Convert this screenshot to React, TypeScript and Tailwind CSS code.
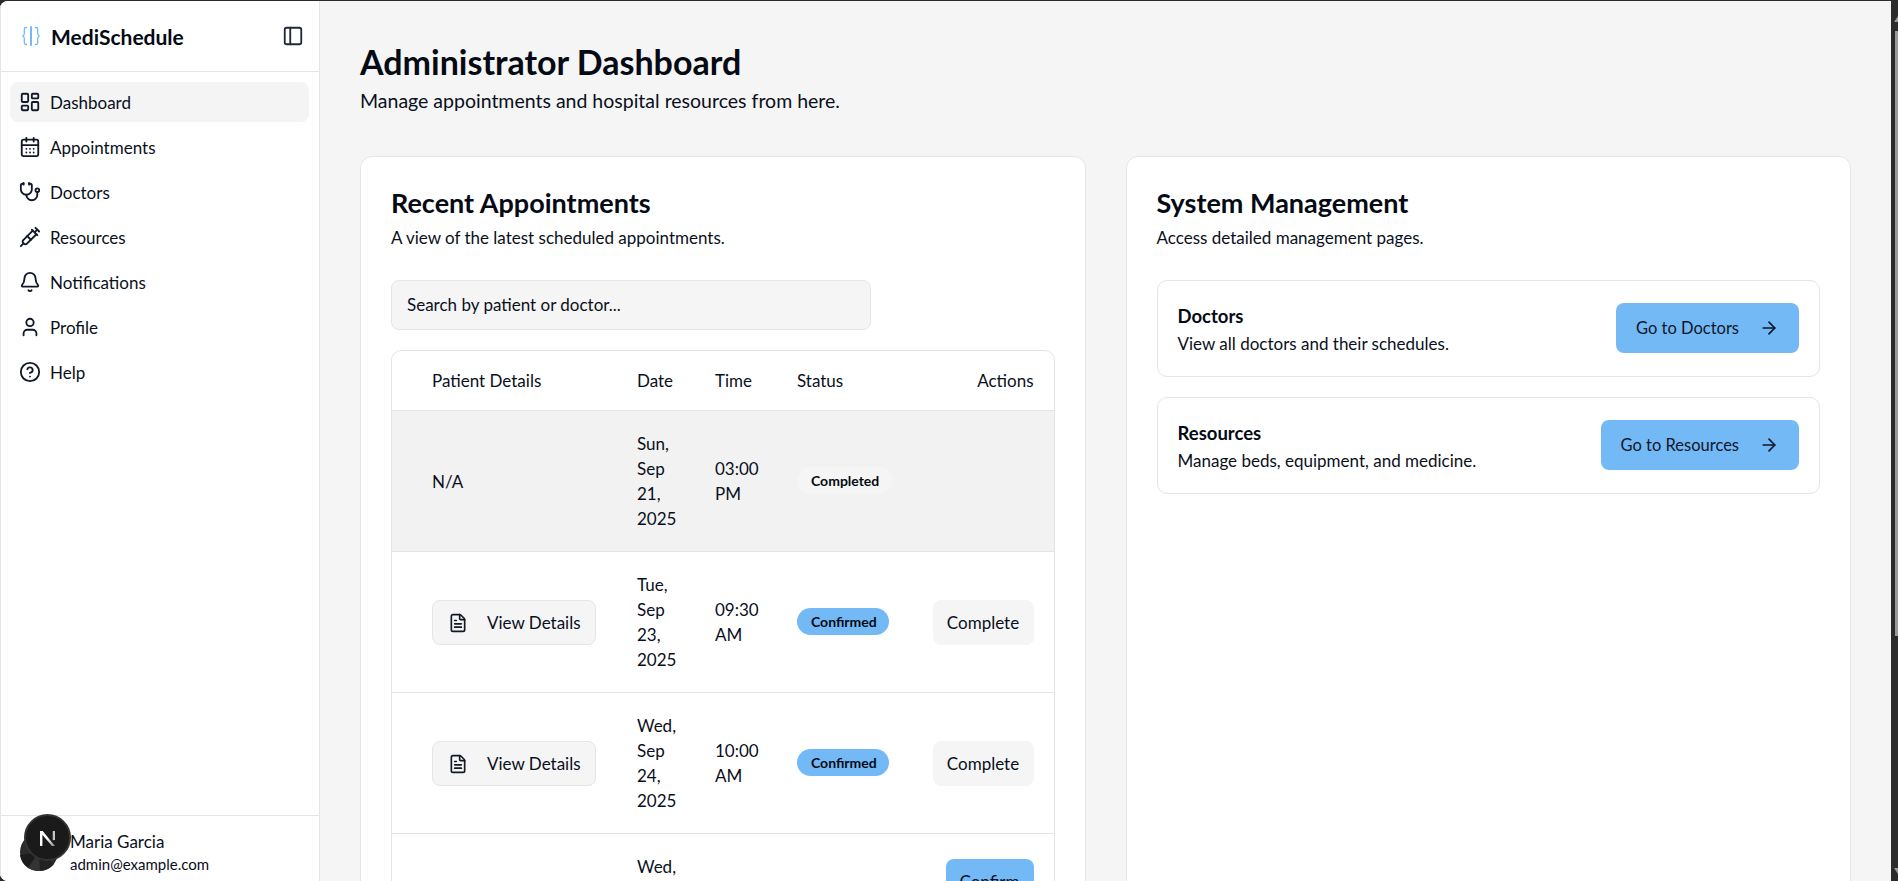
import React from "react";
import { LayoutDashboard, CalendarDays, Stethoscope, Syringe, Bell, User, CircleHelp, PanelLeft, ArrowRight, FileText } from "lucide-react";

const nav = [
  { label: "Dashboard", Icon: LayoutDashboard, active: true },
  { label: "Appointments", Icon: CalendarDays },
  { label: "Doctors", Icon: Stethoscope },
  { label: "Resources", Icon: Syringe },
  { label: "Notifications", Icon: Bell },
  { label: "Profile", Icon: User },
  { label: "Help", Icon: CircleHelp },
];

const rows = [
  { details: false, date: ["Sun,", "Sep", "21,", "2025"], time: ["03:00", "PM"], status: "Completed", action: "", muted: true },
  { details: true, date: ["Tue,", "Sep", "23,", "2025"], time: ["09:30", "AM"], status: "Confirmed", action: "Complete" },
  { details: true, date: ["Wed,", "Sep", "24,", "2025"], time: ["10:00", "AM"], status: "Confirmed", action: "Complete" },
  { details: true, date: ["Wed,", "Sep", "24,", "2025"], time: ["11:00", "AM"], status: "Pending", action: "Confirm" },
];

function Manage({ title, text, cta }: { title: string; text: string; cta: string }) {
  return (
    <div className="h-[97px] rounded-[10px] border border-[#e5e5e5] flex items-center justify-between px-5">
      <div className="pt-[2px]">
        <div className="text-[18.5px] leading-[28px] font-bold text-[#050a14]">{title}</div>
        <div className="text-[17px] leading-[28px] text-[#0a0f1c]">{text}</div>
      </div>
      <button className="h-[50px] mb-[2px] rounded-lg bg-[#73b9f6] pl-5 pr-[20px] flex items-center gap-[20px] text-[16.5px] text-[#0f172a]">
        <span className="pt-[2px]">{cta}</span>
        <ArrowRight size={20} strokeWidth={2} />
      </button>
    </div>
  );
}

export default function App() {
  return (
    <div className="h-[881px] w-[1898px] overflow-hidden flex bg-[#2b2b2b] pt-px text-[#0a0f1c] font-['Lato','Liberation_Sans',sans-serif] relative">
      <div className="flex-1 min-w-0 flex bg-[#f5f5f5] rounded-tl-lg rounded-bl-lg overflow-hidden">
        <aside className="w-[320px] shrink-0 h-full bg-white border-r border-[#e5e5e5] border-l border-l-[#e5e5e5] flex flex-col">
          <div className="h-[71px] shrink-0 border-b border-[#e5e5e5] flex items-center justify-between pl-[20px] pr-[15px]">
            <div className="flex items-center gap-[10px]">
              <svg width="20" height="20" viewBox="0 0 20 20" fill="none" stroke="#73b9f6" strokeWidth="1.3" strokeLinecap="round" strokeLinejoin="round" aria-hidden="true">
                <path d="M5.5 1.5H5C3.8 1.5 3.3 2.2 3.3 3.3v4.2c0 1.2-.6 2-1.6 2.5 1 .5 1.6 1.3 1.6 2.5v4.2c0 1.1.5 1.8 1.7 1.8h.5" />
                <path d="M14.5 1.5h.5c1.2 0 1.7.7 1.7 1.8v4.2c0 1.2.6 2 1.6 2.5-1 .5-1.6 1.3-1.6 2.5v4.2c0 1.1-.5 1.8-1.7 1.8h-.5" />
                <path d="M10 1v18" strokeWidth="2" />
              </svg>
              <span className="text-[21px] font-bold text-[#050a14] mt-[2px]">MediSchedule</span>
            </div>
            <PanelLeft size={22} strokeWidth={2} className="text-[#1f2937]" />
          </div>
          <nav className="flex flex-col gap-[5px] pl-[9px] pr-[10px] pt-[10px] flex-1">
            {nav.map(({ label, Icon, active }) => (
              <div key={label} className={`h-10 rounded-lg flex items-center gap-[9px] pl-[9px] text-[17px] ${active ? "bg-[#f4f4f5]" : ""}`}>
                <Icon size={22} strokeWidth={2} className="text-[#111827]" />
                <span className="pt-[2px]">{label}</span>
              </div>
            ))}
          </nav>
          <div className="h-[66px] shrink-0 border-t border-[#e5e5e5] pl-[69px] pt-[14px]">
            <div className="text-[17px] leading-[24px]">Maria Garcia</div>
            <div className="text-[15px] leading-[20px]">admin@example.com</div>
          </div>
        </aside>

        <main className="flex-1 min-w-0 px-10 pt-[39px]">
          <h1 className="text-[34px] leading-[44px] font-bold text-[#050a14]">Administrator Dashboard</h1>
          <p className="text-[19.5px] leading-[28px] mt-[3px]">Manage appointments and hospital resources from here.</p>
          <div className="grid grid-cols-2 gap-10 mt-[41px]">
            <section className="bg-white rounded-xl border border-[#e5e5e5] h-[800px] px-[30px] pt-[28px]">
              <h2 className="text-[27px] leading-[36px] font-bold text-[#050a14]">Recent Appointments</h2>
              <p className="text-[17px] leading-[24px] mt-[5px]">A view of the latest scheduled appointments.</p>
              <div className="mt-[30px] h-[50px] w-[480px] rounded-lg bg-[#f5f5f5] border border-[#e5e5e5] flex items-center px-[15px] text-[17px]">Search by patient or doctor...</div>
              <div className="mt-[20px] rounded-[10px] border border-[#e5e5e5]">
                <table className="w-full table-fixed text-[17px] leading-[25px] border-collapse">
                  <thead>
                    <tr className="h-[59px] border-b border-[#e5e5e5] text-left">
                      <th className="font-normal pl-10 w-[245px]">Patient Details</th>
                      <th className="font-normal w-[78px]">Date</th>
                      <th className="font-normal w-[82px]">Time</th>
                      <th className="font-normal w-[130px]">Status</th>
                      <th className="font-normal text-right pr-5">Actions</th>
                    </tr>
                  </thead>
                  <tbody>
                    {rows.map((r, i) => (
                      <tr key={i} className={`h-[141px] border-b border-[#e5e5e5] ${r.muted ? "bg-[#f2f2f2]" : ""}`}>
                        <td className={r.details ? "pl-10" : "pl-10 pt-[2px]"}>
                          {r.details ? (
                            <button className="h-[45px] w-[164px] mt-[2px] rounded-lg bg-[#f5f5f5] border border-[#e5e5e5] flex items-center gap-[19px] pl-[15px]">
                              <FileText size={20} strokeWidth={2} className="text-[#111827]" />
                              View Details
                            </button>
                          ) : "N/A"}
                        </td>
                        <td>{r.date.map((d) => <div key={d}>{d}</div>)}</td>
                        <td>{r.time.map((d) => <div key={d}>{d}</div>)}</td>
                        <td>
                          <span className={`inline-block rounded-full pl-[14px] text-[14px] leading-[27px] font-bold text-[#050a14] ${r.status === "Confirmed" ? "bg-[#73b9f6] pr-[12px]" : "bg-[#f5f5f5] pr-[14px]"}`}>{r.status}</span>
                        </td>
                        <td className="pr-5 text-right">
                          {r.action === "Complete" && <button className="h-[45px] w-[101px] mt-[2px] rounded-lg bg-[#f5f5f5] text-center">Complete</button>}
                          {r.action === "Confirm" && (
                            <div className="flex flex-col items-end">
                              <button className="h-[45px] w-[88px] rounded-lg bg-[#73b9f6] text-center">Confirm</button>
                              <button className="h-[45px] w-[88px] rounded-lg bg-[#f5f5f5] text-center">Cancel</button>
                            </div>
                          )}
                        </td>
                      </tr>
                    ))}
                  </tbody>
                </table>
              </div>
            </section>
            <section className="bg-white rounded-xl border border-[#e5e5e5] h-[800px] px-[30px] pt-[28px]">
              <h2 className="text-[27px] leading-[36px] font-bold text-[#050a14]">System Management</h2>
              <p className="text-[17px] leading-[24px] mt-[5px]">Access detailed management pages.</p>
              <div className="mt-[30px] flex flex-col gap-5">
                <Manage title="Doctors" text="View all doctors and their schedules." cta="Go to Doctors" />
                <Manage title="Resources" text="Manage beds, equipment, and medicine." cta="Go to Resources" />
              </div>
            </section>
          </div>
        </main>
      </div>

      <div className="w-[7px] shrink-0 bg-[#2b2b2b] relative">
        <svg width="7" height="8" viewBox="0 0 7 8" className="absolute right-0 top-[14px]" aria-hidden="true">
          <path d="M3 7 7 1v6z" fill="#9a9a9a" />
        </svg>
        <div className="absolute right-0 top-[30px] w-[3px] h-[605px] bg-[#9a9a9a]" />
        <svg width="7" height="8" viewBox="0 0 7 8" className="absolute right-0 top-[866px]" aria-hidden="true">
          <path d="M3 1 7 7V1z" fill="#9a9a9a" />
        </svg>
      </div>

      <svg width="38" height="38" viewBox="0 0 38 38" className="absolute left-[20px] top-[833px]" aria-hidden="true">
        <circle cx="19" cy="19" r="19" fill="#2b2b2b" />
        <path d="M19 19 0 22a19 19 0 0 0 8 13z" fill="#1c1c1c" />
        <path d="M19 19 8 35a19 19 0 0 0 12 3z" fill="#333333" />
        <path d="M19 19 20 38a19 19 0 0 0 14-7z" fill="#222222" />
      </svg>
      <div className="absolute left-[24px] top-[814px] w-[47px] h-[47px] rounded-full bg-[#1a1a1a] border-2 border-[#333] flex items-center justify-center z-10">
        <svg width="15" height="15" viewBox="2.5 2 11.2 14" preserveAspectRatio="none" fill="none" className="mt-[2px]" aria-hidden="true">
          <defs>
            <linearGradient id="ng" x1="0" y1="0" x2="1" y2="1">
              <stop offset="0.45" stopColor="#ffffff" />
              <stop offset="1" stopColor="#8a8a8a" />
            </linearGradient>
          </defs>
          <path d="M2.5 2h2l9.2 14h-2.3L4.3 5.4V16H2.5z" fill="url(#ng)" />
          <rect x="12" y="2" width="1.7" height="8.5" fill="#c4c4c4" />
        </svg>
      </div>
    </div>
  );
}
